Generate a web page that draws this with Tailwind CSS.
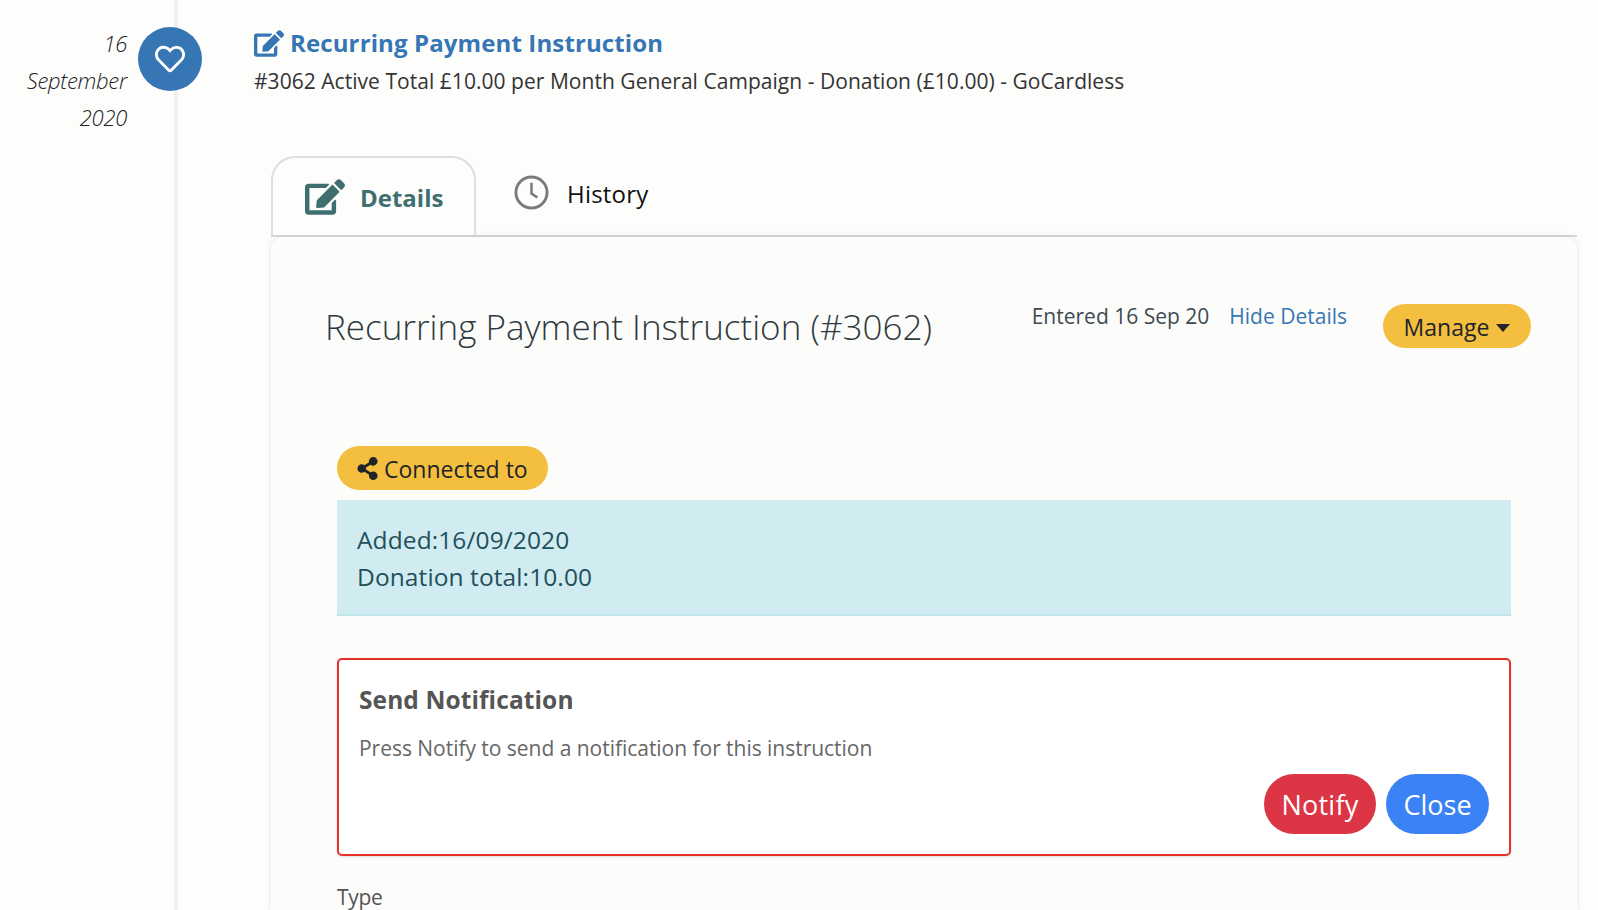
<!DOCTYPE html>
<html lang="en">
<head>
<meta charset="UTF-8">
<title>Recurring Payment Instruction</title>
<script src="https://cdn.jsdelivr.net/npm/@tailwindcss/browser@4"></script>
</head>
<body class="bg-[#fdfdfc] font-['Open_Sans','Noto_Sans',sans-serif] text-[#333] overflow-hidden">
<div class="h-[910px] overflow-hidden flex">
  <!-- date column -->
  <div class="w-[138px] shrink-0 pt-[25px] pr-[11px] text-right italic font-light text-[22px] leading-[37px] text-[#222] tracking-[-0.3px]">
    <div>16</div><div>September</div><div>2020</div>
  </div>

  <!-- timeline line and circle -->
  <div class="w-[115px] shrink-0 relative">
    <div class="absolute left-[36px] top-0 bottom-0 w-[4px] bg-[#f0f0f0]"></div>
    <div class="absolute left-0 top-[27px] w-[64px] h-[64px] rounded-full bg-[#3776b5] flex items-center justify-center">
      <svg class="w-[30px] h-[30px]" viewBox="0 0 512 512" fill="#fff"><path d="M458.4 64.3C400.6 15.7 311.3 23 256 79.3 200.7 23 111.4 15.6 53.6 64.3-21.6 127.6-10.6 230.8 43 285.5l175.4 178.7c10 10.2 23.4 15.9 37.6 15.9 14.3 0 27.6-5.6 37.6-15.8L469 285.6c53.5-54.7 64.7-157.9-10.6-221.3zm-23.6 187.5L259.4 430.5c-2.4 2.4-4.4 2.4-6.8 0L77.2 251.8c-36.5-37.2-43.9-107.6 7.3-150.7 38.9-32.7 98.9-27.8 136.5 10.5l35 35.7 35-35.7c37.8-38.5 97.8-43.2 136.5-10.6 51.1 43.1 43.5 113.9 7.3 150.8z"/></svg>
    </div>
  </div>

  <div class="flex-1 min-w-0 pr-[21px]">
    <div class="pt-[25px] pl-[1px] h-[156px]">
      <div class="flex items-center gap-[6px] h-[36px] text-[#3776b5]">
        <svg class="w-[30px] h-[27px]" viewBox="0 0 576 512" fill="#3776b5"><path d="M402.6 83.2l90.2 90.2c3.8 3.8 3.8 10 0 13.8L274.4 405.6l-92.8 10.3c-12.4 1.4-22.9-9.1-21.5-21.5l10.3-92.8L388.8 83.2c3.8-3.8 10-3.8 13.8 0zm162-22.9l-48.8-48.8c-15.2-15.2-39.9-15.2-55.2 0l-35.4 35.4c-3.8 3.8-3.8 10 0 13.8l90.2 90.2c3.8 3.8 10 3.8 13.8 0l35.4-35.4c15.2-15.3 15.2-40 0-55.2zM384 346.2V448H64V128h229.8c3.2 0 6.2-1.3 8.5-3.5l40-40c7.6-7.6 2.2-20.5-8.5-20.5H48C21.5 64 0 85.5 0 112v352c0 26.5 21.5 48 48 48h352c26.5 0 48-21.5 48-48V306.2c0-10.7-12.9-16-20.5-8.5l-40 40c-2.2 2.3-3.5 5.3-3.5 8.5z"/></svg>
        <span class="text-[24px] font-bold tracking-[0.12px]">Recurring Payment Instruction</span>
      </div>
      <div class="text-[21px] leading-[40px] text-[#333] tracking-[0.04px]">#3062 Active Total £10.00 per Month General Campaign - Donation (£10.00) - GoCardless</div>
    </div>

    <!-- tabs -->
    <div class="ml-[18px] h-[81px] flex border-b-2 border-[#d8d8d8]">
      <div class="w-[205px] h-[79px] border-2 border-b-0 border-[#dedede] rounded-t-[24px] flex items-center pl-[32px] gap-[15px] bg-[#fdfdfc]">
        <svg class="w-[40px] h-[36px]" viewBox="0 0 576 512" fill="#3f6e70"><path d="M402.6 83.2l90.2 90.2c3.8 3.8 3.8 10 0 13.8L274.4 405.6l-92.8 10.3c-12.4 1.4-22.9-9.1-21.5-21.5l10.3-92.8L388.8 83.2c3.8-3.8 10-3.8 13.8 0zm162-22.9l-48.8-48.8c-15.2-15.2-39.9-15.2-55.2 0l-35.4 35.4c-3.8 3.8-3.8 10 0 13.8l90.2 90.2c3.8 3.8 10 3.8 13.8 0l35.4-35.4c15.2-15.3 15.2-40 0-55.2zM384 346.2V448H64V128h229.8c3.2 0 6.2-1.3 8.5-3.5l40-40c7.6-7.6 2.2-20.5-8.5-20.5H48C21.5 64 0 85.5 0 112v352c0 26.5 21.5 48 48 48h352c26.5 0 48-21.5 48-48V306.2c0-10.7-12.9-16-20.5-8.5l-40 40c-2.2 2.3-3.5 5.3-3.5 8.5z"/></svg>
        <span class="text-[24px] font-bold text-[#3f6e70] pt-[2px]">Details</span>
      </div>
      <div class="flex items-start pt-[19px] pl-[38px] gap-[18px]">
        <svg class="w-[35px] h-[35px]" viewBox="0 0 36 36" fill="none" stroke="#7b7b7b" stroke-width="3"><circle cx="18" cy="18" r="16"/><path d="M18 8v11l6 4" stroke-width="2.6"/></svg>
        <span class="text-[24px] leading-[38px] text-[#111] tracking-[0.2px]">History</span>
      </div>
    </div>

    <!-- card -->
    <div class="ml-[18px] h-[673px] rounded-t-[12px] bg-[#fcfcfa] shadow-[0_0_6px_rgba(0,0,0,0.1)] pt-[60px] px-[66px]">
      <div class="flex items-start justify-between -mr-[20px] -ml-[12px] h-[149px]">
        <div class="text-[35px] leading-[60px] font-light text-[#2f3a40]">Recurring Payment Instruction (#3062)</div>
        <div class="flex items-start mr-[-26px]">
          <span class="text-[21px] leading-[38px] text-[#3d4a52]">Entered 16 Sep 20</span>
          <span class="ml-[20px] text-[21px] leading-[38px] text-[#3776b5]">Hide Details</span>
          <div class="ml-[36px] mt-[7px] mr-[26px] h-[44px] w-[148px] rounded-full bg-[#f4bf3f] flex items-center justify-center gap-[7px] text-[23px] text-[#212529] pt-[2px]">
            Manage<span class="w-0 h-0 border-x-[7px] border-x-transparent border-t-[8px] border-t-[#212529] mt-[2px]"></span>
          </div>
        </div>
      </div>

      <div class="inline-flex h-[44px] w-[211px] rounded-full bg-[#f4bf3f] items-center pl-[20px] gap-[6px] text-[23px] text-[#212529] align-top">
        <svg class="w-[21px] h-[23px]" viewBox="0 0 448 512" fill="#212529"><path d="M352 320c-22.608 0-43.387 7.819-59.79 20.895l-102.486-64.054a96.551 96.551 0 0 0 0-41.683l102.486-64.054C308.613 184.181 329.392 192 352 192c53.019 0 96-42.981 96-96S405.019 0 352 0s-96 42.981-96 96c0 7.158.79 14.13 2.276 20.841L155.79 180.895C139.387 167.819 118.608 160 96 160c-53.019 0-96 42.981-96 96s42.981 96 96 96c22.608 0 43.387-7.819 59.79-20.895l102.486 64.054A96.301 96.301 0 0 0 256 416c0 53.019 42.981 96 96 96s96-42.981 96-96-42.981-96-96-96z"/></svg>
        <span class="pt-[2px]">Connected to</span>
      </div>

      <div class="mt-[10px] h-[116px] bg-[#d1ecf1] border-b-2 border-[#bee5eb] pt-[21px] pl-[20px] text-[24.5px] leading-[37px] text-[#22505c] tracking-[0.1px]">
        <div>Added:16/09/2020</div>
        <div>Donation total:10.00</div>
      </div>

      <div class="mt-[42px] h-[198px] bg-white border-2 border-[#e8302a] rounded-[5px] px-[20px] pt-[22px] shadow-sm">
        <div class="text-[24.5px] leading-[36px] font-bold text-[#555] tracking-[0.1px]">Send Notification</div>
        <div class="mt-[12px] text-[21px] leading-[36px] text-[#666] tracking-[-0.03px]">Press Notify to send a notification for this instruction</div>
        <div class="mt-[8px] flex justify-end gap-[10px]">
          <div class="w-[112px] h-[60px] rounded-full bg-[#dc3545] text-white text-[27px] pt-[2px] flex items-center justify-center tracking-[0.2px]">Notify</div>
          <div class="w-[103px] h-[60px] rounded-full bg-[#3b82f6] text-white text-[27px] pt-[2px] flex items-center justify-center">Close</div>
        </div>
      </div>

      <div class="mt-[29px] text-[21px] leading-[24px] text-[#555] tracking-[-0.3px]">Type</div>
    </div>
  </div>
</div>
</body>
</html>
